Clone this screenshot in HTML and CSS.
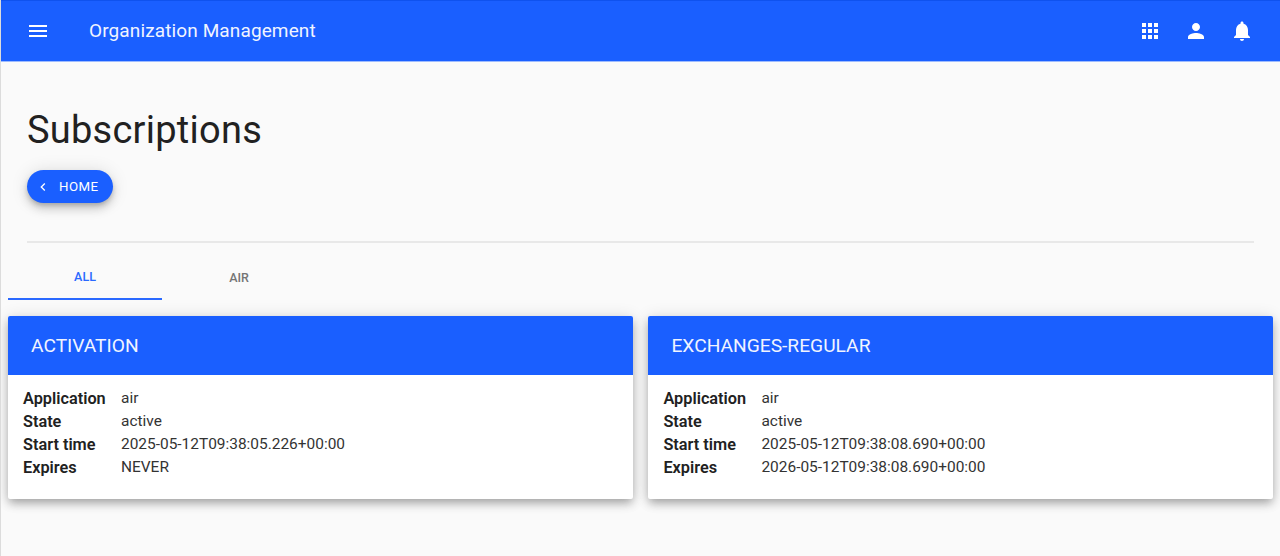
FILE: index.html
```html
<!DOCTYPE html>
<html lang="en">
<head>
<meta charset="utf-8">
<title>Subscriptions</title>
<link rel="stylesheet" href="styles.css">
</head>
<body>
<header class="appbar">
  <button class="icon-btn menu" aria-label="Menu">
    <svg viewBox="0 0 24 24" width="24" height="24"><path d="M3 18h18v-2H3v2zm0-5h18v-2H3v2zm0-7v2h18V6H3z"/></svg>
  </button>
  <div class="app-title">Organization Management</div>
  <div class="actions">
    <button class="icon-btn" aria-label="Apps">
      <svg viewBox="0 0 24 24" width="24" height="24"><path d="M4 8h4V4H4v4zm6 12h4v-4h-4v4zm-6 0h4v-4H4v4zm0-6h4v-4H4v4zm6 0h4v-4h-4v4zm6-10v4h4V4h-4zm-6 4h4V4h-4v4zm6 6h4v-4h-4v4zm0 6h4v-4h-4v4z"/></svg>
    </button>
    <button class="icon-btn" aria-label="Account">
      <svg viewBox="0 0 24 24" width="24" height="24"><path d="M12 12c2.21 0 4-1.79 4-4s-1.79-4-4-4-4 1.79-4 4 1.79 4 4 4zm0 2c-2.67 0-8 1.34-8 4v2h16v-2c0-2.66-5.33-4-8-4z"/></svg>
    </button>
    <button class="icon-btn" aria-label="Notifications">
      <svg viewBox="0 0 24 24" width="24" height="24"><path d="M12 22c1.1 0 2-.9 2-2h-4c0 1.1.89 2 2 2zm6-6v-5c0-3.07-1.64-5.64-4.5-6.32V4c0-.83-.67-1.5-1.5-1.5s-1.5.67-1.5 1.5v.68C7.63 5.36 6 7.92 6 11v5l-2 2v1h16v-1l-2-2z"/></svg>
    </button>
  </div>
</header>
<main class="page">
  <section class="intro">
    <h1 class="page-title">Subscriptions</h1>
    <button class="home-btn">
      <svg viewBox="0 0 24 24" width="16" height="16"><path d="M15.41 7.41 14 6l-6 6 6 6 1.41-1.41L10.83 12z"/></svg>
      <span class="home-label">HOME</span>
    </button>
    <hr class="divider">
  </section>
  <nav class="tabs">
    <div class="tab active">ALL</div>
    <div class="tab">AIR</div>
  </nav>
  <section class="cards">
    <article class="card">
      <h2 class="card-head">ACTIVATION</h2>
      <dl class="props">
        <dt>Application</dt><dd>air</dd>
        <dt>State</dt><dd>active</dd>
        <dt>Start time</dt><dd>2025-05-12T09:38:05.226+00:00</dd>
        <dt>Expires</dt><dd>NEVER</dd>
      </dl>
    </article>
    <article class="card">
      <h2 class="card-head">EXCHANGES-REGULAR</h2>
      <dl class="props">
        <dt>Application</dt><dd>air</dd>
        <dt>State</dt><dd>active</dd>
        <dt>Start time</dt><dd>2025-05-12T09:38:08.690+00:00</dd>
        <dt>Expires</dt><dd>2026-05-12T09:38:08.690+00:00</dd>
      </dl>
    </article>
  </section>
</main>
</body>
</html>
```
FILE: styles.css
```css
* { box-sizing: border-box; }
html, body { margin: 0; height: 100%; }
body {
  background: #fafafa;
  color: #212121;
  font-family: Roboto, "Liberation Sans", sans-serif;
  overflow: hidden;
  border-left: 1px solid #dcdcdc;
}
.appbar {
  height: 62px;
  margin-left: -1px;
  background: #1a5fff;
  border-top: 1px solid #0f52ee;
  border-bottom: 1px solid #9dbbff;
  color: #fff;
  display: flex;
  align-items: center;
  padding: 0 26px 0 26px;
}
.icon-btn {
  width: 24px;
  height: 24px;
  padding: 0;
  border: 0;
  background: none;
  fill: #fff;
  display: block;
}
.app-title {
  margin-left: 39px;
  padding-bottom: 2px;
  font-size: 19px;
  letter-spacing: 0.12px;
  color: #f0f4ff;
}
.actions {
  margin-left: auto;
  display: flex;
  gap: 22px;
}
.page { padding: 0 6px 0 7px; }
.intro { padding: 46px 20px 0 19px; }
.page-title {
  margin: 0;
  font-size: 38px;
  font-weight: 400;
  line-height: 44px;
  letter-spacing: 0.25px;
}
.home-btn {
  margin-top: 18px;
  width: 86px;
  height: 33px;
  border: 0;
  border-radius: 17px;
  background: #1a5fff;
  color: #fff;
  fill: #fff;
  font: 400 13.3px Roboto, sans-serif;
  letter-spacing: 0.4px;
  display: flex;
  align-items: center;
  padding: 0 0 0 8px;
  gap: 8px;
  box-shadow: 0 3px 5px -1px rgba(0,0,0,.2), 0 6px 10px 0 rgba(0,0,0,.14), 0 1px 18px 0 rgba(0,0,0,.12);
}
.home-label { padding-bottom: 1px; }
.divider {
  margin: 38px 0 0;
  border: 0;
  height: 2px;
  background: #e8e8e8;
}
.tabs {
  display: flex;
  margin-top: 12px;
}
.tab {
  width: 154px;
  height: 45px;
  display: flex;
  align-items: center;
  justify-content: center;
  font-size: 12.5px;
  font-weight: 500;
  color: #757575;
}
.tab.active {
  color: #2a69ff;
  border-bottom: 2px solid #2a69ff;
}
.cards {
  margin-top: 16px;
  display: grid;
  grid-template-columns: 625px 625px;
  gap: 15.45px;
}
.card {
  height: 183px;
  background: #fff;
  border-radius: 2px;
  box-shadow: 0 5px 10px -1px rgba(0,0,0,.3), 0 1px 16px 0 rgba(0,0,0,.12);
  overflow: hidden;
}
.card-head {
  margin: 0;
  height: 59px;
  background: #1a5fff;
  color: #f0f4ff;
  font-size: 19.2px;
  font-weight: 400;
  line-height: 59px;
  padding-left: 23px;
}
.props {
  margin: 0;
  padding: 12px 15px 0;
  display: grid;
  grid-template-columns: 98px 1fr;
  grid-auto-rows: 23px;
  line-height: 23px;
}
.props dt { font-size: 16.3px; font-weight: 600; }
.props dd { margin: 0; font-size: 15.45px; color: #333; }
```
